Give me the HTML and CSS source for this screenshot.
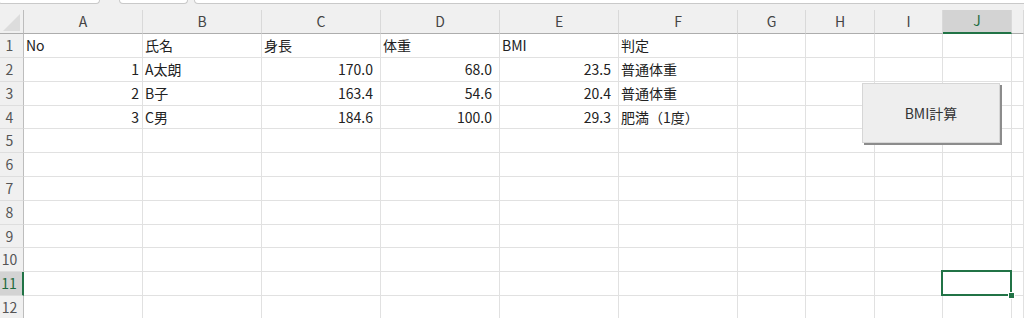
FILE: index.html
```html
<!DOCTYPE html>
<html lang="ja">
<head>
  <meta charset="UTF-8" />
  <title>BMI</title>
  <link rel="stylesheet" href="styles.css">
</head>
<body>

  <div class="tabs">
    <div class="tab tab1"></div>
    <div class="tab tab2"></div>
    <div class="tab tab3"></div>
  </div>

  <div class="sheet">
    <!-- 列見出し -->
    <div class="corner">
      <svg width="24" height="24" viewBox="0 0 24 24"><polygon points="20,4 20,21 3,21" fill="#dcdcdc"/></svg>
    </div>
    <div class="ch">A</div><div class="ch">B</div><div class="ch">C</div><div class="ch">D</div><div class="ch">E</div><div class="ch">F</div><div class="ch">G</div><div class="ch">H</div><div class="ch">I</div><div class="ch sel">J</div><div class="ch"></div>

    <div class="rh">1</div><div class="c">No</div><div class="c">氏名</div><div class="c">身長</div><div class="c">体重</div><div class="c">BMI</div><div class="c">判定</div><div class="c"></div><div class="c"></div><div class="c"></div><div class="c"></div><div class="c"></div>
    <div class="rh">2</div><div class="c n">1</div><div class="c">A太朗</div><div class="c n d">170.0</div><div class="c n d">68.0</div><div class="c n d">23.5</div><div class="c">普通体重</div><div class="c"></div><div class="c"></div><div class="c"></div><div class="c"></div><div class="c"></div>
    <div class="rh">3</div><div class="c n">2</div><div class="c">B子</div><div class="c n d">163.4</div><div class="c n d">54.6</div><div class="c n d">20.4</div><div class="c">普通体重</div><div class="c"></div><div class="c"></div><div class="c"></div><div class="c"></div><div class="c"></div>
    <div class="rh">4</div><div class="c n">3</div><div class="c">C男</div><div class="c n d">184.6</div><div class="c n d">100.0</div><div class="c n d">29.3</div><div class="c">肥満（1度）</div><div class="c"></div><div class="c"></div><div class="c"></div><div class="c"></div><div class="c"></div>
    <div class="rh">5</div><div class="c"></div><div class="c"></div><div class="c"></div><div class="c"></div><div class="c"></div><div class="c"></div><div class="c"></div><div class="c"></div><div class="c"></div><div class="c"></div><div class="c"></div>
    <div class="rh">6</div><div class="c"></div><div class="c"></div><div class="c"></div><div class="c"></div><div class="c"></div><div class="c"></div><div class="c"></div><div class="c"></div><div class="c"></div><div class="c"></div><div class="c"></div>
    <div class="rh">7</div><div class="c"></div><div class="c"></div><div class="c"></div><div class="c"></div><div class="c"></div><div class="c"></div><div class="c"></div><div class="c"></div><div class="c"></div><div class="c"></div><div class="c"></div>
    <div class="rh">8</div><div class="c"></div><div class="c"></div><div class="c"></div><div class="c"></div><div class="c"></div><div class="c"></div><div class="c"></div><div class="c"></div><div class="c"></div><div class="c"></div><div class="c"></div>
    <div class="rh">9</div><div class="c"></div><div class="c"></div><div class="c"></div><div class="c"></div><div class="c"></div><div class="c"></div><div class="c"></div><div class="c"></div><div class="c"></div><div class="c"></div><div class="c"></div>
    <div class="rh">10</div><div class="c"></div><div class="c"></div><div class="c"></div><div class="c"></div><div class="c"></div><div class="c"></div><div class="c"></div><div class="c"></div><div class="c"></div><div class="c"></div><div class="c"></div>
    <div class="rh sel">11</div><div class="c"></div><div class="c"></div><div class="c"></div><div class="c"></div><div class="c"></div><div class="c"></div><div class="c"></div><div class="c"></div><div class="c"></div><div class="c active"><span class="handle"></span></div><div class="c"></div>
    <div class="rh">12</div><div class="c"></div><div class="c"></div><div class="c"></div><div class="c"></div><div class="c"></div><div class="c"></div><div class="c"></div><div class="c"></div><div class="c"></div><div class="c"></div><div class="c"></div>

    <button class="macro-btn">BMI計算</button>
  </div>

</body>
</html>
```

FILE: styles.css
```css
body {
  margin: 0;
  background: #fff;
  font-family: "Noto Sans CJK JP", "Noto Sans", sans-serif;
  color: #222;
  overflow: hidden;
}

/* 上のタブ帯 */
.tabs {
  height: 10px;
  background: #f0f0f0;
  display: flex;
}

.tab {
  box-sizing: border-box;
  height: 4px;
  background: #fff;
  border: 1px solid #c9c9c9;
  border-top: none;
  border-radius: 0 0 4px 4px;
}
.tab1 { width: 102px; margin-left: -2px; }
.tab2 { width: 69px; margin-left: 19px; }
.tab3 { flex-grow: 1; margin-left: 6px; margin-right: -4px; }

/* シート本体 */
.sheet {
  position: relative;
  display: grid;
  grid-template-columns: 24px 119px 119px 119px 119px 119px 119px 68px 69px 68px 69px 1fr;
  grid-template-rows: 24px 24px 24px 24px 23px 24px 24px 24px 24px 23px 24px 24px 24px;
  font-size: 14px;
}

.sheet > div {
  box-sizing: border-box;
  border-right: 1px solid #e1e1e1;
  border-bottom: 1px solid #e1e1e1;
  white-space: nowrap;
}

.corner {
  background: #f0f0f0;
  border-right-color: #bdbdbd !important;
  border-bottom-color: #adadad !important;
}
.corner svg { display: block; }

.ch {
  background: #f0f0f0;
  color: #444;
  text-align: center;
  line-height: 22px;
  border-right-color: #d9d9d9 !important;
  border-bottom-color: #adadad !important;
}

.ch.sel {
  background: #d3d3d3;
  color: #1d6b40;
  border-bottom: 2px solid #217346 !important;
  line-height: 21px;
}

.rh {
  background: #f0f0f0;
  color: #555;
  text-align: center;
  padding-right: 4px;
  line-height: 22px;
  border-right-color: #bdbdbd !important;
  border-bottom-color: #dedede !important;
}

.rh.sel {
  background: #d3d3d3;
  color: #1d6b40;
  border-right: 2px solid #217346 !important;
}

.c {
  padding: 0 2px;
  line-height: 22px;
  color: #222;
}

.c.n {
  text-align: right;
  padding-right: 3px;
}

.c.d {
  padding-right: 7px;
}

/* 選択中のセル */
.c.active {
  position: relative;
}
.c.active::before {
  content: "";
  position: absolute;
  top: -2px;
  left: -2px;
  right: -1px;
  bottom: -1px;
  border: 2px solid #217346;
}
.handle {
  position: absolute;
  right: -3px;
  bottom: -3px;
  width: 5px;
  height: 5px;
  background: #217346;
  outline: 1px solid #fff;
}

/* マクロボタン */
.macro-btn {
  position: absolute;
  left: 862px;
  top: 73px;
  width: 138px;
  height: 60px;
  background: #eeeeee;
  border: 1px solid #d6d6d6;
  box-shadow: 2px 2px 0 #8c8c8c;
  font-family: "Noto Sans CJK JP", "Noto Sans", sans-serif;
  font-size: 14px;
  color: #333;
  padding: 0;
}
```
